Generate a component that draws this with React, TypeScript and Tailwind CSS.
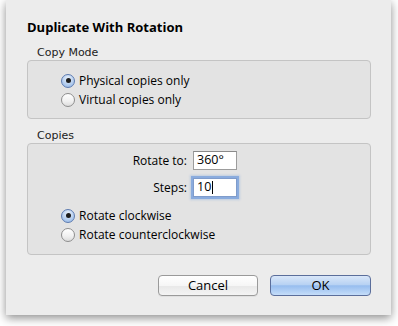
import React from "react";

const OPEN = { fontFamily: '"Open Sans", "DejaVu Sans", sans-serif' };

function Radio({ checked, label }: { checked: boolean; label: string }) {
  return (
    <div className="flex h-[19px] items-center">
      <div
        className={
          "flex h-[14px] w-[14px] items-center justify-center rounded-full border " +
          (checked
            ? "border-[#5d7bb0] bg-[radial-gradient(circle_at_50%_30%,#e9f1fb,#a9c6ec_70%,#8fb3e6)]"
            : "border-[#8e8e8e] bg-[linear-gradient(#ffffff,#f0f0f0_60%,#dcdcdc)]")
        }
      >
        {checked && <div className="h-[5px] w-[5px] rounded-full bg-[#1d1d1d]" />}
      </div>
      <span className="ml-[4px] mt-[1px] text-[12px] leading-none text-black" style={OPEN}>
        {label}
      </span>
    </div>
  );
}

export default function App() {
  return (
    <div
      className="h-[326px] w-[398px] bg-white"
      style={{ fontFamily: '"DejaVu Sans", "Liberation Sans", sans-serif' }}
    >
      <div className="ml-[6px] flex h-[315px] w-[385px] flex-col bg-[#ececec] pl-[21px] pr-[20px] pt-[19px] shadow-[0_3px_9px_rgba(0,0,0,0.45)]">
        <div className="h-[16px] text-[13px] font-bold leading-[16px] text-black" style={OPEN}>
          Duplicate With Rotation
        </div>

        <div className="mt-[11px] h-[14px] pl-[10px] text-[11px] leading-[14px] text-[#222]">Copy Mode</div>
        <div className="mt-0 h-[59px] rounded-[4px] border border-[#c4c4c4] bg-[#e3e3e3] pl-[33px] pt-[10px]">
          <Radio checked label="Physical copies only" />
          <Radio checked={false} label="Virtual copies only" />
        </div>

        <div className="mt-[10px] h-[14px] pl-[10px] text-[11px] leading-[14px] text-[#222]">Copies</div>
        <div className="mt-0 flex h-[112px] flex-col rounded-[4px] border border-[#c4c4c4] bg-[#e3e3e3] pt-[7px]">
          <div className="flex h-[19px] items-center">
            <span className="w-[159px] text-right text-[12px] text-black" style={OPEN}>
              Rotate to:
            </span>
            <div
              className="ml-[6px] flex h-[19px] w-[44px] items-center border border-[#9c9c9c] border-t-[#8a8a8a] bg-white pl-[3px] text-[12.5px] text-black"
              style={OPEN}
            >
              360°
            </div>
          </div>
          <div className="mt-[8px] flex h-[19px] items-center">
            <span className="w-[159px] text-right text-[12px] text-black" style={OPEN}>
              Steps:
            </span>
            <div
              className="ml-[6px] flex h-[19px] w-[44px] items-center border border-[#7f9ccb] bg-white pl-[3px] text-[12.5px] text-black shadow-[0_0_0_2px_rgba(120,160,220,0.75),0_0_2px_3px_rgba(120,160,220,0.35)]"
              style={OPEN}
            >
              10<span className="ml-[1px] inline-block h-[13px] w-[1px] bg-black" />
            </div>
          </div>
          <div className="mt-[9px] pl-[33px]">
            <Radio checked label="Rotate clockwise" />
            <Radio checked={false} label="Rotate counterclockwise" />
          </div>
        </div>

        <div className="mt-[20px] flex justify-end gap-[12px]">
          <button
            className="h-[21px] w-[100px] rounded-[4px] border border-[#9a9a9a] bg-[linear-gradient(#ffffff,#f6f6f6_50%,#e8e8e8_51%,#f4f4f4)] text-[13px] leading-none text-black shadow-[0_1px_0_rgba(0,0,0,0.05)]"
            style={OPEN}
          >
            Cancel
          </button>
          <button
            className="h-[21px] w-[101px] rounded-[4px] border border-[#5b6e9b] bg-[linear-gradient(#d9e7f9,#b8d2f3_45%,#97bdef_52%,#c5ddf9)] text-[13px] leading-none text-black"
            style={OPEN}
          >
            OK
          </button>
        </div>
      </div>
    </div>
  );
}
